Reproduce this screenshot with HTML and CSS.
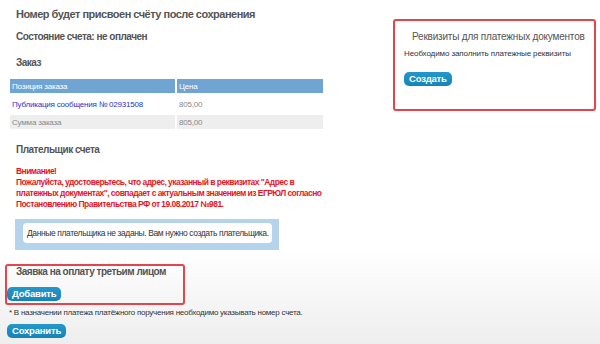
FILE: index.html
```html
<!DOCTYPE HTML>
<html>
<head>
    <meta charset="utf-8" />
    <title>Счёт</title>
    <link rel="stylesheet" href="styles.css">
</head>
<body>

<div class="page">
    <div class="main">
        <h2 class="title">Номер будет присвоен счёту после сохранения</h2>
        <h3 class="sub sub-state">Состояние счета: не оплачен</h3>
        <h3 class="sub sub-order">Заказ</h3>

        <table class="order">
            <tr class="order-head">
                <th class="col-name">Позиция заказа</th>
                <th>Цена</th>
            </tr>
            <tr class="order-row">
                <td><a href="#">Публикация сообщения № 02931508</a></td>
                <td>805,00</td>
            </tr>
            <tr class="order-total">
                <td>Сумма заказа</td>
                <td>805,00</td>
            </tr>
        </table>

        <h3 class="sub sub-payer">Плательщик счета</h3>
        <div class="warning">
            Внимание!<br>
            Пожалуйста, удостоверьтесь, что адрес, указанный в реквизитах "Адрес в платежных документах", совпадает с актуальным значением из ЕГРЮЛ согласно Постановлению Правительства РФ от 19.08.2017 №981.
        </div>

        <div class="notice">
            <div class="notice-inner">Данные плательщика не заданы. Вам нужно создать плательщика.</div>
        </div>

        <div class="third-party marked">
            <h3 class="sub">Заявка на оплату третьим лицом</h3>
            <button class="btn">Добавить</button>
        </div>

        <p class="footnote">* В назначении платежа платёжного поручения необходимо указывать номер счета.</p>
        <button class="btn btn-save">Сохранить</button>
    </div>

    <div class="side">
        <div class="requisites marked">
            <h3 class="req-title">Реквизиты для платежных документов</h3>
            <p class="req-text">Необходимо заполнить платежные реквизиты</p>
            <button class="btn">Создать</button>
        </div>
    </div>
</div>

</body>
</html>
```

FILE: styles.css
```css
html {
    min-height: 100%;
    background: linear-gradient(to bottom, #fff 0, #fff 248px, #eeeeee 344px);
}
body {
    margin: 0;
    font-family: "Liberation Sans", Arial, sans-serif;
    color: #555;
}
.page {
    display: flex;
}
.main {
    width: 340px;
    padding: 6px 0 0 5px;
    box-sizing: border-box;
}
.side {
    margin-left: auto;
    padding: 19px 4px 0 0;
}
.title {
    margin: 0 0 0 11px;
    font-size: 11px;
    line-height: 16px;
    letter-spacing: -0.5px;
}
.sub {
    margin: 0 0 0 11px;
    font-size: 10px;
    line-height: 14px;
    letter-spacing: -0.5px;
}
.sub-state {
    margin-top: 8px;
}
.sub-order {
    margin-top: 12px;
}
.order {
    margin: 8px 0 0 3px;
    border-collapse: separate;
    border-spacing: 2px 1px;
    font-size: 8px;
    letter-spacing: -0.2px;
}
.order th, .order td {
    text-align: left;
    font-weight: normal;
    padding: 0 2px;
    color: #888;
}
.order th {
    background: #6fa4d3;
    color: #fff;
    height: 14px;
}
.order th.col-name {
    width: 161px;
}
.order th + th {
    width: 142px;
}
.order-row td {
    height: 20px;
}
.order a {
    color: #2536cc;
    text-decoration: none;
}
.order-total td {
    background: #eee;
    height: 14px;
}
.sub-payer {
    margin-top: 13px;
}
.warning {
    margin: 9px 0 0 11px;
    color: #e5161f;
    font-weight: bold;
    font-size: 8.5px;
    line-height: 11px;
    letter-spacing: -0.55px;
    width: 320px;
}
.notice {
    margin: 9px 0 0 10px;
    width: 264px;
    background: #b5d4ec;
    padding: 4px 7px 7px 8px;
    box-sizing: border-box;
}
.notice-inner {
    background: #fff;
    border-radius: 4px;
    font-size: 8.5px;
    line-height: 20px;
    letter-spacing: -0.4px;
    white-space: nowrap;
    color: #333;
    padding: 0 4px;
}
.marked {
    border: 2px solid #e3454c;
    border-radius: 3px;
    box-sizing: border-box;
}
.third-party {
    margin: 14px 0 0 0;
    width: 180px;
    padding: 0 0 2px 0;
}
.third-party .sub {
    margin: 0 0 9px 9px;
    line-height: 12px;
}
.btn {
    display: block;
    margin: 0;
    padding: 0 5px;
    height: 14px;
    border: 0;
    border-radius: 5px;
    background: linear-gradient(to bottom, #2397cc, #1683b8);
    color: #fff;
    font-family: "Liberation Sans", Arial, sans-serif;
    font-weight: bold;
    font-size: 9.5px;
    line-height: 14px;
    letter-spacing: -0.2px;
}
.footnote {
    margin: 3px 0 0 4px;
    font-size: 8px;
    line-height: 10px;
    letter-spacing: -0.25px;
    color: #333;
}
.btn-save {
    margin: 6px 0 0 2px;
}
.third-party .btn {
    margin-left: 0;
}
.requisites {
    width: 203px;
    height: 92px;
    padding: 9px 7px 0 9px;
}
.req-title {
    margin: 0 0 0 8px;
    font-size: 10px;
    line-height: 14px;
    letter-spacing: -0.2px;
    font-weight: normal;
    color: #555;
}
.req-text {
    margin: 5px 0 13px 0;
    font-size: 8px;
    line-height: 10px;
    letter-spacing: -0.1px;
    color: #333;
}
```
